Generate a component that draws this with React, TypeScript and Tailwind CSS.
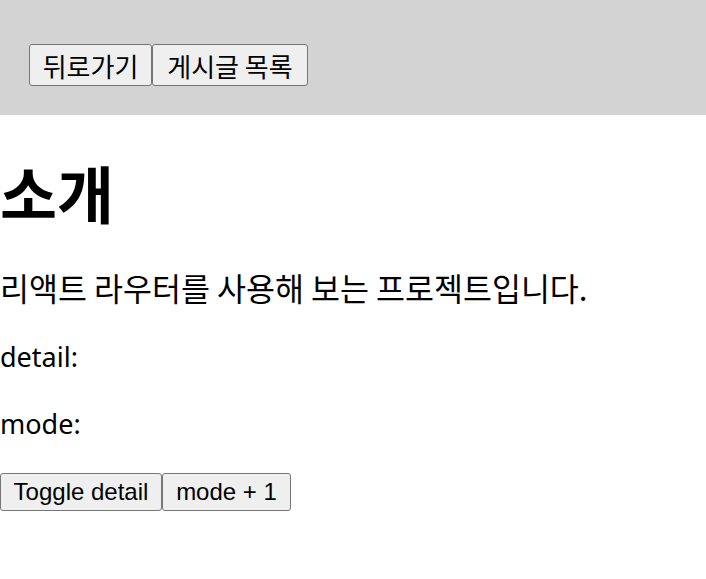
import React from "react";

const btn =
  "flex items-center justify-center bg-[#efefef] border border-[#767676] rounded-[3px] text-black";

export default function App() {
  return (
    <div className="w-[706px] h-[579px] bg-white text-black font-['Noto_Sans','Noto_Sans_CJK_KR',sans-serif]">
      <header className="h-[115px] bg-[#d3d3d3] pt-[44px] pl-[29px] flex items-start">
        <button className={`${btn} w-[123px] h-[42px] text-[26px] font-['Noto_Sans_CJK_KR',sans-serif]`}>뒤로가기</button>
        <button className={`${btn} w-[156px] h-[42px] text-[26px] font-['Noto_Sans_CJK_KR',sans-serif]`}>게시글 목록</button>
      </header>
      <main>
        <h1 className="mt-[37px] h-[80px] leading-[80px] text-[62px] font-bold font-['Noto_Sans_CJK_KR',sans-serif]">소개</h1>
        <p className="mt-[35px] h-[40px] leading-[40px] text-[31.5px] font-['Noto_Sans_CJK_KR',sans-serif]">리액트 라우터를 사용해 보는 프로젝트입니다.</p>
        <p className="mt-[30px] h-[40px] leading-[40px] text-[27px]">detail:</p>
        <p className="mt-[27px] h-[40px] leading-[40px] text-[27px]">mode:</p>
        <div className="mt-[29px] flex">
          <button className={`${btn} w-[162px] h-[38px] text-[24px] font-['Liberation_Sans',sans-serif]`}>Toggle detail</button>
          <button className={`${btn} w-[129px] h-[38px] text-[24px] font-['Liberation_Sans',sans-serif]`}>mode + 1</button>
        </div>
      </main>
    </div>
  );
}
